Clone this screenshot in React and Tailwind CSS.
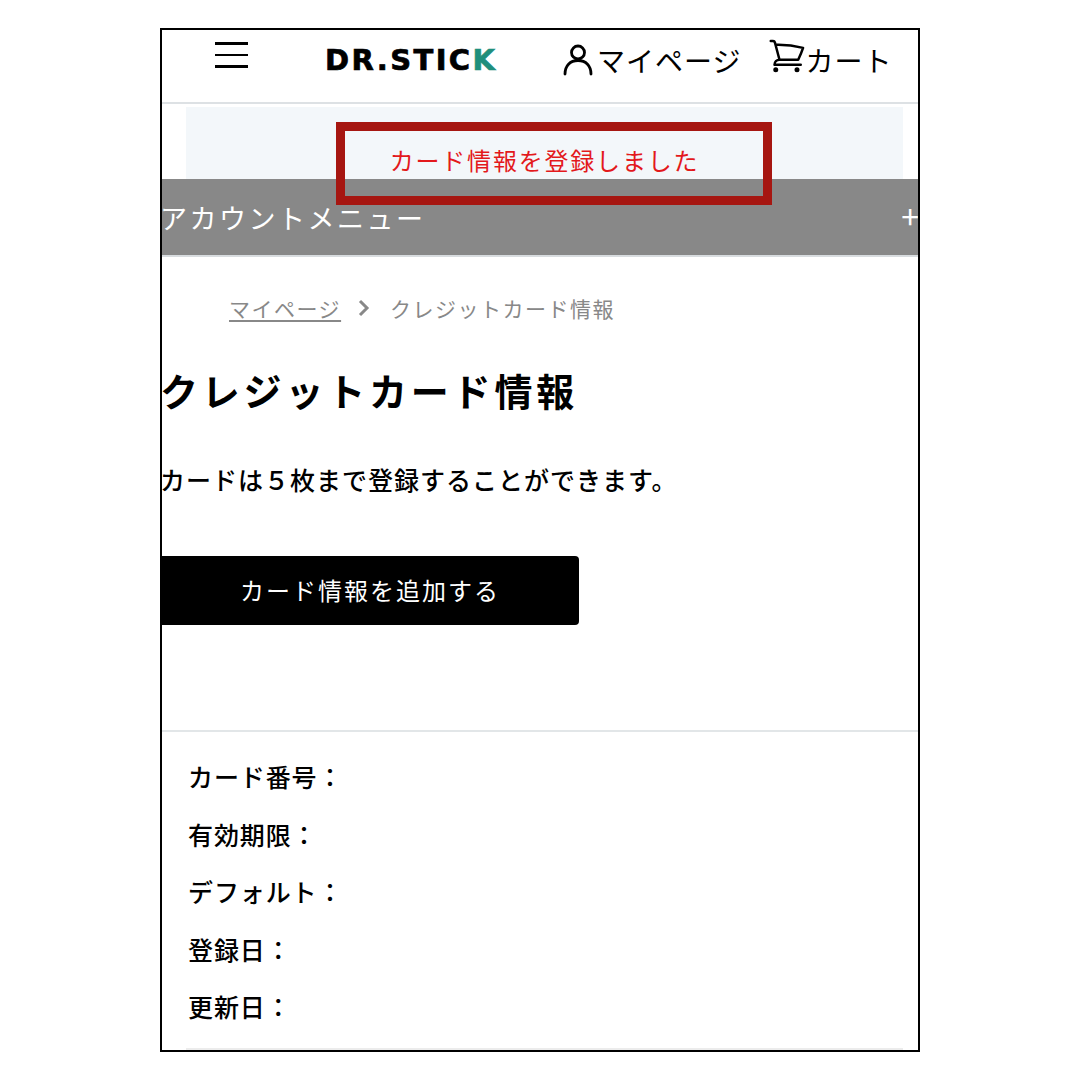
import { HiOutlineShoppingCart } from "react-icons/hi2";

const jp = { fontFamily: '"Noto Sans CJK JP", "Noto Sans", sans-serif' };

function UserIcon() {
  return (
    <svg viewBox="0 0 30 32" className="w-[30px] h-[32px]" fill="none" stroke="black" strokeWidth="2.8" strokeLinecap="round">
      <circle cx="15" cy="8.5" r="6.5" />
      <path d="M2 30c0-8 5-13.5 13-13.5S28 22 28 30" />
    </svg>
  );
}

const rows = ["カード番号：", "有効期限：", "デフォルト：", "登録日：", "更新日："];

export default function App() {
  return (
    <div className="w-[1080px] h-[1080px] bg-white pt-[28px] pl-[160px]" style={jp}>
      <div className="relative w-[760px] h-[1024px] border-2 border-black overflow-hidden">
        {/* Header */}
        <header className="h-[74px] border-b-2 border-[#dde1e4] flex items-start text-black">
          <div className="ml-[53px] mt-[12px] w-[33px] flex flex-col gap-[9px]">
            <div className="h-[3px] bg-black" />
            <div className="h-[2px] bg-black" />
            <div className="h-[3px] bg-black" />
          </div>
          <div className="ml-[77px] mt-[10px] w-[172px] text-[29px] leading-[40px] font-black tracking-[2.4px] whitespace-nowrap [-webkit-text-stroke:0.7px_currentColor]" style={{ fontFamily: '"DejaVu Sans", sans-serif' }}>
            DR.STIC<span className="text-[#1f8f7c]">K</span>
          </div>
          <div className="ml-[66px] mt-[10px] flex items-center">
            <UserIcon />
            <span className="ml-[4px] text-[28px] leading-[40px] tracking-[1px]">マイページ</span>
          </div>
          <div className="ml-[26px] mt-[2px] flex items-center">
            <HiOutlineShoppingCart className="w-[40px] h-[40px] -mr-[2px] stroke-[1.5]" />
            <span className="text-[28px] leading-[40px] tracking-[1px] mt-[8px]">カート</span>
          </div>
        </header>

        {/* Notice */}
        <div className="mt-[3px] mx-[24px] w-[717px] h-[72px] bg-[#f3f7fa] flex justify-center">
          <p className="mt-[37px] text-[24px] leading-[32px] tracking-[1.8px] text-[#e3191c] whitespace-nowrap">カード情報を登録しました</p>
        </div>

        {/* Account menu */}
        <div className="h-[78px] bg-[#888888] border-b-2 border-[#d8dcdf] flex items-center justify-between pt-[2px] text-white">
          <span className="-ml-[2px] text-[27px] leading-[36px] tracking-[2.5px]">アカウントメニュー</span>
          <span className="text-[32px] leading-[36px] -mt-[6px] -mr-[1px]">+</span>
        </div>

        {/* Breadcrumb */}
        <nav className="mt-[35px] ml-[67px] flex items-center text-[21px] leading-[32px] tracking-[1.5px] text-[#888888]">
          <span className="underline underline-offset-3">マイページ</span>
          <svg viewBox="0 0 12 18" className="ml-[17px] mr-[20px] w-[12px] h-[18px]" fill="none" stroke="#888888" strokeWidth="3">
            <path d="M2 2l7 7-7 7" />
          </svg>
          <span>クレジットカード情報</span>
        </nav>

        <h1 className="mt-[40px] -ml-[2px] text-[38px] leading-[52px] font-bold tracking-[3.8px] text-black whitespace-nowrap">クレジットカード情報</h1>

        <p className="mt-[45px] -ml-[2px] text-[25px] leading-[36px] tracking-[1px] font-medium text-black whitespace-nowrap">カードは５枚まで登録することができます。</p>

        <button className="mt-[59px] -ml-[1px] w-[418px] h-[69px] pb-[2px] bg-black text-white text-[24px] tracking-[2px] rounded-r-[4px]">カード情報を追加する</button>

        {/* Card details */}
        <div className="mt-[105px] border-t-2 border-[#e2e6e8] pt-[16px] pl-[26px] pb-[12px]">
          {rows.map((row) => (
            <div key={row} className="h-[57.6px] flex items-center text-[25px] tracking-[0.9px] font-medium text-black">{row}</div>
          ))}
        </div>
        <div className="mx-[24px] w-[717px] h-[2px] bg-[#ececec]" />

        {/* Annotation */}
        <div className="absolute left-[174px] top-[92px] w-[436px] h-[83px] border-[9px] border-[#a61611]" />
      </div>
    </div>
  );
}
